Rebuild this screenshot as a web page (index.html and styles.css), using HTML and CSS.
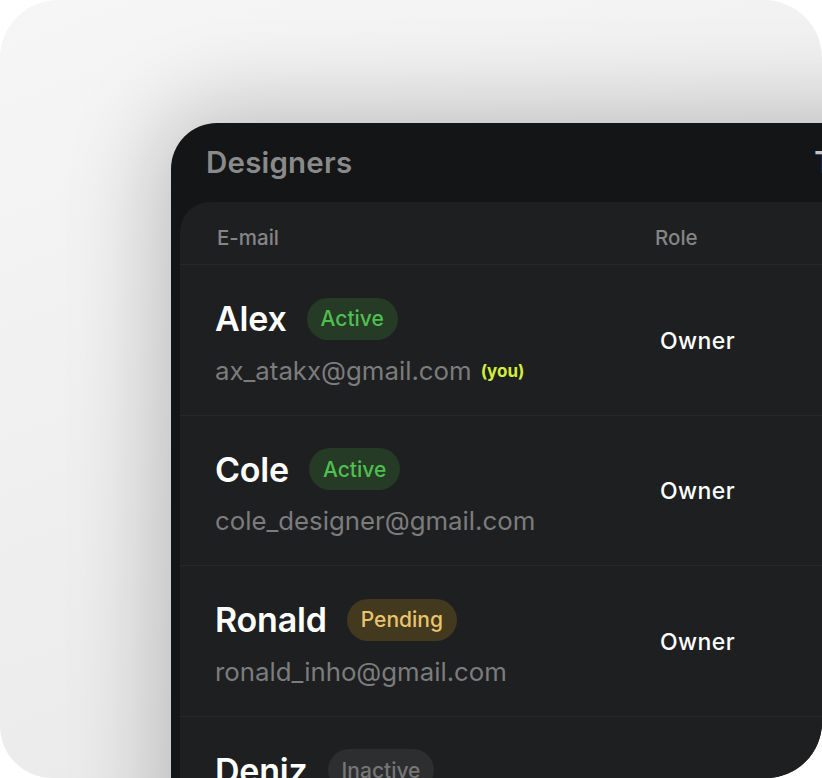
FILE: index.html
```html
<!DOCTYPE html>
<html>
<head>
<meta charset="utf-8">
<link rel="stylesheet" href="styles.css">
</head>
<body>
<div class="frame">
  <div class="panel">
    <div class="titles">
      <span class="title">Designers</span>
      <span class="title title-next">Team</span>
    </div>
    <div class="table">
      <div class="thead">
        <div class="col-main">E-mail</div>
        <div class="col-role">Role</div>
      </div>
      <div class="row">
        <div class="col-main">
          <div class="name-line"><span class="name">Alex</span><span class="badge active">Active</span></div>
          <div class="email">ax_atakx@gmail.com<span class="you">(you)</span></div>
        </div>
        <div class="col-role role">Owner</div>
      </div>
      <div class="row">
        <div class="col-main">
          <div class="name-line"><span class="name">Cole</span><span class="badge active">Active</span></div>
          <div class="email">cole_designer@gmail.com</div>
        </div>
        <div class="col-role role">Owner</div>
      </div>
      <div class="row">
        <div class="col-main">
          <div class="name-line"><span class="name">Ronald</span><span class="badge pending">Pending</span></div>
          <div class="email">ronald_inho@gmail.com</div>
        </div>
        <div class="col-role role">Owner</div>
      </div>
      <div class="row">
        <div class="col-main">
          <div class="name-line"><span class="name">Deniz</span><span class="badge inactive">Inactive</span></div>
          <div class="email">deniz@gmail.com</div>
        </div>
        <div class="col-role role">Owner</div>
      </div>
    </div>
  </div>
</div>
</body>
</html>
```
FILE: styles.css
```css
* { box-sizing: border-box; }
html, body {
  margin: 0;
  padding: 0;
  background: #ffffff;
}
body {
  width: 822px;
  height: 778px;
  overflow: hidden;
  font-family: Inter, "Noto Sans", sans-serif;
}
.frame {
  width: 822px;
  height: 778px;
  border-radius: 58px 58px 56px 52px;
  overflow: hidden;
  background: linear-gradient(160deg, #f6f6f6 0%, #eeeeee 55%, #e8e8e8 100%);
  padding: 123px 0 0 171px;
}
.panel {
  width: 900px;
  height: 800px;
  background: #141516;
  border-top-left-radius: 46px;
  box-shadow: 0 0 90px 14px rgba(0, 0, 0, 0.22);
  padding: 0 0 0 9px;
}
.titles {
  height: 79px;
  display: flex;
  align-items: center;
  padding-left: 26px;
  padding-bottom: 2px;
}
.title {
  font-size: 29.5px;
  font-weight: 600;
  color: #8a8a8a;
  letter-spacing: 0.2px;
}
.title-next {
  margin-left: 462px;
  color: #c4c4c4;
}
.table {
  background: #1e1f21;
  border-top-left-radius: 30px;
  height: 700px;
}
.thead {
  height: 63px;
  display: flex;
  align-items: center;
  border-bottom: 1px solid #27282b;
  font-size: 20.5px;
  font-weight: 500;
  color: #858585;
  padding-top: 8px;
}
.col-main {
  width: 475px;
  padding-left: 36px;
}
.thead .col-main { padding-left: 37px; }
.col-role {
  flex: 1;
}
.row {
  height: 150.5px;
  display: flex;
  align-items: center;
  border-bottom: 1px solid #27282b;
}
.row .col-main {
  padding-left: 35px;
  padding-top: 5px;
}
.name-line {
  display: flex;
  align-items: center;
  height: 42px;
}
.name {
  font-size: 34px;
  font-weight: 600;
  color: #ffffff;
  letter-spacing: -0.2px;
}
.badge {
  margin-left: 20px;
  height: 42px;
  border-radius: 21px;
  padding: 0 14px;
  display: inline-flex;
  align-items: center;
  font-size: 21px;
  font-weight: 500;
}
.badge.active { background: #253b26; color: #4fbf4f; }
.badge.pending { background: #43391f; color: #e9c46c; }
.badge.inactive { background: #2d2e30; color: #767676; }
.email {
  margin-top: 15px;
  height: 32px;
  line-height: 32px;
  font-size: 25.8px;
  color: #7c7c7c;
}
.you {
  margin-left: 9px;
  font-size: 17px;
  font-weight: 700;
  color: #d2ee3a;
  vertical-align: 3px;
}
.role {
  padding-left: 5px;
  padding-top: 2px;
  font-size: 23px;
  font-weight: 500;
  color: #ffffff;
  letter-spacing: 0.4px;
}
```
